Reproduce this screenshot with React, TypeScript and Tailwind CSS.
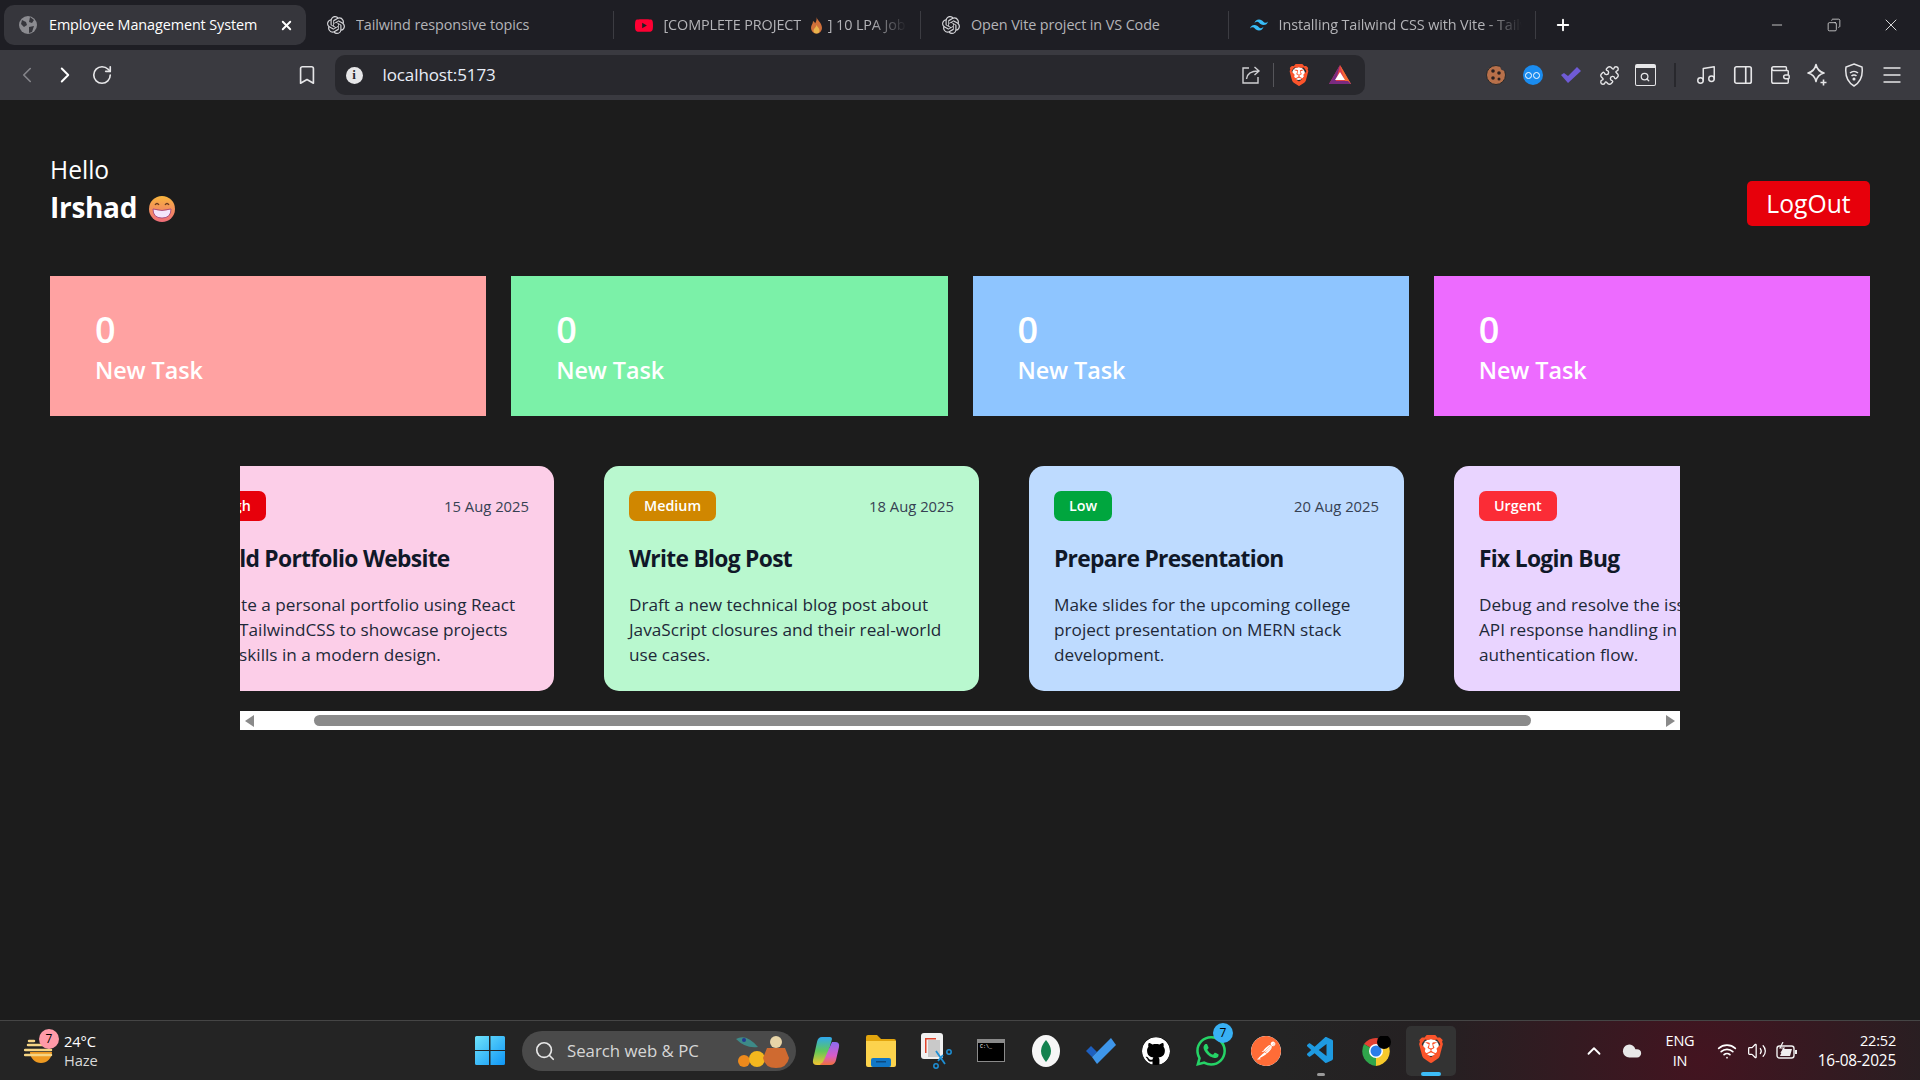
import React from 'react';
import {
  Bookmark, ChevronLeft, ChevronRight, ChevronUp, Cloud, Menu, Minus, Music, PanelRight, Plus, Puzzle,
  RotateCw, Search, Volume2, Wallet, Wifi, X, Copy,
} from 'lucide-react';
import { SiBrave, SiGithub, SiOpenai, SiPostman, SiTailwindcss, SiWhatsapp, SiYoutube } from 'react-icons/si';
import { VscVscode } from 'react-icons/vsc';

const stats = [
  { count: 0, label: 'New Task', bg: 'bg-red-300' },
  { count: 0, label: 'New Task', bg: 'bg-green-300' },
  { count: 0, label: 'New Task', bg: 'bg-blue-300' },
  { count: 0, label: 'New Task', bg: 'bg-fuchsia-400' },
];

const tasks = [
  {
    priority: 'High', date: '15 Aug 2025', title: 'Build Portfolio Website', bg: 'bg-pink-200', badge: 'bg-red-600',
    lines: ['Create a personal portfolio using React', 'and TailwindCSS to showcase projects', 'and skills in a modern design.'],
  },
  {
    priority: 'Medium', date: '18 Aug 2025', title: 'Write Blog Post', bg: 'bg-green-200', badge: 'bg-yellow-600',
    lines: ['Draft a new technical blog post about', 'JavaScript closures and their real-world', 'use cases.'],
  },
  {
    priority: 'Low', date: '20 Aug 2025', title: 'Prepare Presentation', bg: 'bg-blue-200', badge: 'bg-green-600',
    lines: ['Make slides for the upcoming college', 'project presentation on MERN stack', 'development.'],
  },
  {
    priority: 'Urgent', date: '22 Aug 2025', title: 'Fix Login Bug', bg: 'bg-purple-200', badge: 'bg-red-500',
    lines: ['Debug and resolve the issue with the', 'API response handling in the', 'authentication flow.'],
  },
];

function Globe() {
  return (
    <svg width="18" height="18" viewBox="0 0 18 18">
      <circle cx="9" cy="9" r="9" fill="#8b8b90" />
      <path d="M3 4l4 2 1 3-3 2-3-3zM11 1l4 3-2 3-3-1zM10 11l5-1-2 6-3 1z" fill="#36363c" />
    </svg>
  );
}

function Flame() {
  return (
    <svg width="13" height="17" viewBox="0 0 13 17" className="inline-block mx-[5px] -mt-[2px]">
      <path d="M6.5 0C7 3 12 6 12 11a5.500 5.500 0 0 1-11 0C1 8 3 7 3 4c1 .5 2 1.500 2 2.500C6 5 7 3 6.500 0z" fill="#d0703a" />
      <path d="M6.500 8c.5 2 3 3 3 5.500a3 3 0 0 1-6 0C3.500 11.500 6 10.500 6.500 8z" fill="#e8b34c" />
    </svg>
  );
}

function BraveIcon({ size, className }: { size: number; className?: string }) {
  return (
    <span className={`relative flex shrink-0 items-center justify-center ${className ?? ''}`}>
      <span className="absolute left-[20%] top-[15%] h-[60%] w-[60%] rounded-full bg-white" />
      <SiBrave size={size} className="relative text-[#fb542b]" />
    </span>
  );
}

function Tab({ icon, children, active, fade, last }: { icon: React.ReactNode; children: React.ReactNode; active?: boolean; fade?: boolean; last?: boolean }) {
  return (
    <div className={`relative flex h-10 shrink-0 items-center rounded-[10px] ${active ? 'w-[302px] bg-[#36363c] pl-[15px] pr-[12px] text-white' : 'w-[307.500px] pl-[21px] pr-[14px] text-[#b4b4b8]'} `}>
      <span className="flex w-[18px] shrink-0 items-center justify-center">{icon}</span>
      <span className={`flex-1 overflow-hidden whitespace-nowrap text-[14.400px] tracking-[-0.1px] ${active ? 'ml-[12px]' : 'ml-[11px]'} ${fade ? '[mask-image:linear-gradient(90deg,#000_85%,transparent)]' : ''}`}>{children}</span>
      {active && <X size={15} strokeWidth={3} className="text-white" />}
      {!active && !last && <span className="absolute right-0 top-[6px] h-[28px] w-px bg-[#3c3c42]" />}
    </div>
  );
}

function TabBar() {
  return (
    <div className="flex h-[50px] shrink-0 items-center bg-[#1e1e24] pl-1">
      <Tab icon={<Globe />} active>Employee Management System</Tab>
      <Tab icon={<SiOpenai size={18} className="text-[#d4d4d8]" />}>Tailwind responsive topics</Tab>
      <Tab icon={<SiYoutube size={21} className="text-[#ff0033]" />} fade>[COMPLETE PROJECT <Flame />] 10 LPA Job Ready</Tab>
      <Tab icon={<SiOpenai size={18} className="text-[#d4d4d8]" />}>Open Vite project in VS Code</Tab>
      <Tab icon={<SiTailwindcss size={20} className="text-[#38bdf8]" />} fade>Installing Tailwind CSS with Vite - Tailwind</Tab>
      <Plus size={18} strokeWidth={2.5} className="ml-[24px] -translate-x-[6px] text-white" />
      <div className="ml-auto flex items-center text-[#e8e8e8]">
        <Minus size={16} strokeWidth={1.2} className="mr-[42px]" />
        <Copy size={14} strokeWidth={1.3} className="mr-[40px] -scale-x-100" />
        <X size={20} strokeWidth={1.1} className="mr-[19px]" />
      </div>
    </div>
  );
}

function Toolbar() {
  return (
    <div className="flex h-[50px] shrink-0 items-center bg-[#3a3a40] pl-[14px] text-[#e6e6e8]">
      <ChevronLeft size={26} strokeWidth={1.5} className="text-[#85858a]" />
      <ChevronRight size={26} strokeWidth={1.8} className="ml-[12px] text-white" />
      <RotateCw size={22} strokeWidth={1.8} className="ml-[13px]" />
      <Bookmark size={22} strokeWidth={1.8} className="ml-[183px]" />
      <div className="ml-[16.500px] flex h-10 w-[1030px] shrink-0 items-center rounded-[10px] bg-[#28282d] pl-[11px] pr-[14px]">
        <span className="flex h-[17px] w-[17px] items-center justify-center rounded-full bg-[#e6e6e8] font-['Liberation_Serif',serif] text-[13px] font-bold text-[#28282d]">i</span>
        <span className="ml-[20px] text-[17px] tracking-[-0.1px] text-[#e8eef8]">localhost:5173</span>
        <svg width="20" height="20" viewBox="0 0 20 20" fill="none" stroke="#cfcfd2" strokeWidth="1.400" className="ml-auto">
          <path d="M8 3H2v15h15v-6" />
          <path d="M5.500 14c.5-5 4-8 12-8M13.500 2l4.500 4-4.500 4" />
        </svg>
        <span className="ml-[12px] h-[24px] w-px bg-[#55555a]" />
        <BraveIcon size={22} className="ml-[14px]" />
        <svg width="22" height="20" viewBox="0 0 22 20" className="ml-[19px]">
          <path d="M11 0L0 19h22z" fill="#e0404a" />
          <path d="M11 0L0 19h6z" fill="#7a2a80" />
          <path d="M11 0l11 19h-5z" fill="#f26a32" />
          <path d="M11 7l-5 8h10z" fill="#fff" />
          <path d="M0 19h22l-3-3H3z" fill="#7a2a80" />
        </svg>
      </div>
      <svg width="20" height="20" viewBox="0 0 20 20" className="ml-[121px]">
        <circle cx="10" cy="10" r="9.500" fill="#b8704a" stroke="#2a2a2a" />
        <circle cx="7" cy="6" r="1.800" fill="#2a2020" /><circle cx="13" cy="8" r="1.800" fill="#2a2020" />
        <circle cx="7" cy="13" r="1.800" fill="#2a2020" /><circle cx="13" cy="14" r="1.500" fill="#2a2020" />
        <circle cx="18" cy="2" r="3.500" fill="#3a3a40" />
      </svg>
      <span className="ml-[17px] flex h-5 w-5 items-center justify-center gap-px rounded-full bg-[#1a8cf0]">
        <span className="h-[7px] w-[7px] rounded-full border border-white" />
        <span className="h-[7px] w-[7px] rounded-full border border-white" />
      </span>
      <svg width="20" height="16" viewBox="0 0 20 16" className="ml-[18px]">
        <path d="M0 8l3-2 4 3 9-9 4 4L7 16z" fill="#6f5bd6" />
      </svg>
      <Puzzle size={21} strokeWidth={1.6} className="ml-[18px]" />
      <span className="ml-[15px] flex h-[22px] w-[21px] items-center justify-center rounded-[2px] border-[1.5px] border-t-[4px] border-[#e6e6e8]">
        <Search size={10} strokeWidth={3} />
      </span>
      <span className="ml-[18px] h-[24px] w-[2px] bg-[#28282d]" />
      <Music size={22} strokeWidth={1.6} className="ml-[19px]" />
      <PanelRight size={22} strokeWidth={1.8} className="ml-[15px]" />
      <Wallet size={22} strokeWidth={1.6} className="ml-[15px]" />
      <svg width="22" height="24" viewBox="0 0 22 24" fill="none" stroke="#e6e6e8" strokeWidth="1.600" className="ml-[15px]">
        <path d="M10 1.500q1.500 7 8 8.500q-6.500 1.500-8 8.500q-1.500-7-8-8.500q6.500-1.500 8-8.500z" strokeLinejoin="round" />
        <path d="M17.500 16.500v6M14.500 19.500h6" />
      </svg>
      <svg width="20" height="24" viewBox="0 0 20 24" fill="none" stroke="#e6e6e8" strokeWidth="1.500" className="ml-[16px]">
        <path d="M10 1l8 3c1 8-1 15-8 19C3 19 1 12 2 4z" />
        <path d="M6 10a6 6 0 0 1 8 0M7.500 13a3.500 3.500 0 0 1 5 0" />
        <circle cx="10" cy="16" r=".8" fill="#e6e6e8" />
      </svg>
      <Menu size={24} strokeWidth={1.4} className="ml-[16px]" />
    </div>
  );
}

function Grin() {
  return (
    <svg width="26" height="26" viewBox="0 0 26 26" className="ml-[12px] mt-[3px]">
      <defs>
        <linearGradient id="grin" x1="0" y1="0" x2="0" y2="1">
          <stop offset="0" stopColor="#f8b53c" />
          <stop offset="1" stopColor="#ee6c7a" />
        </linearGradient>
      </defs>
      <circle cx="13" cy="13" r="13" fill="url(#grin)" />
      <path d="M6 9q2-3 4 0M16 9q2-3 4 0" fill="none" stroke="#6b3a20" strokeWidth="1.300" />
      <path d="M4 13q9 3 18 0q0 9-9 9t-9-9z" fill="#f3e4fb" stroke="#9c3a78" strokeWidth=".8" />
    </svg>
  );
}

function TaskCard({ task }: { task: (typeof tasks)[number] }) {
  return (
    <div className={`h-[225px] w-[375px] shrink-0 rounded-[15px] p-[25px] ${task.bg}`}>
      <div className="flex items-center justify-between">
        <span className={`flex h-[30px] items-center rounded-[7px] px-[15px] text-[14.300px] font-semibold text-white ${task.badge}`}>{task.priority}</span>
        <span className="text-[14.800px] text-[#364153]">{task.date}</span>
      </div>
      <h2 className="mt-[20px] text-[22.800px] font-bold leading-[35px] tracking-[-0.7px] text-[#101828]">{task.title}</h2>
      <p className="mt-[16px] text-[17.200px] leading-[25px] text-[#1e2939]">
        {task.lines.map((line) => (
          <span key={line} className="block whitespace-nowrap">{line}</span>
        ))}
      </p>
    </div>
  );
}

function ScrollStrip() {
  return (
    <div className="mx-auto mt-[50px] w-[1440px]">
      <div className="overflow-hidden">
        <div className="-ml-[61px] flex gap-[50px]">
          {tasks.map((task) => <TaskCard key={task.title} task={task} />)}
        </div>
      </div>
      <div className="mt-[20px] flex h-[19px] items-center bg-white pl-[5px] pr-[5px]">
        <span className="h-0 w-0 border-y-[6px] border-r-[9px] border-y-transparent border-r-[#8a8a8a]" />
        <span className="ml-[60px] h-[11px] w-[1217px] rounded-full bg-[#8a8a8a]" />
        <span className="ml-auto h-0 w-0 border-y-[6px] border-l-[9px] border-y-transparent border-l-[#8a8a8a]" />
      </div>
    </div>
  );
}

function Dashboard() {
  return (
    <main className="flex-1 bg-[#1c1c1c] px-[50px] pt-[50px] text-white">
      <div className="flex h-[76px] items-end justify-between">
        <div className="translate-y-[1px]">
          <p className="text-[24.600px] font-medium leading-[37px]">Hello</p>
          <div className="flex items-center">
            <span className="text-[28px] font-bold leading-[39px] tracking-[-0.3px]">Irshad</span>
            <Grin />
          </div>
        </div>
        <button className="h-[45px] w-[123px] rounded-[5px] bg-[#e7000b] pt-[2px] text-[24.700px] leading-none text-white">LogOut</button>
      </div>
      <div className="mt-[50px] grid grid-cols-4 gap-[25px]">
        {stats.map((stat) => (
          <div key={stat.bg} className={`h-[140px] px-[45px] pt-[30px] ${stat.bg}`}>
            <div className="text-[36px] font-semibold leading-[47px]">{stat.count}</div>
            <div className="text-[23.400px] font-semibold leading-[34px] tracking-[-0.1px]">{stat.label}</div>
          </div>
        ))}
      </div>
      <ScrollStrip />
    </main>
  );
}

function Windows() {
  return (
    <svg width="30" height="29" viewBox="0 0 30 29">
      <defs>
        <linearGradient id="win" x1="0" y1="0" x2="1" y2="1">
          <stop offset="0" stopColor="#6fe3fb" />
          <stop offset="1" stopColor="#0f96f6" />
        </linearGradient>
      </defs>
      <path d="M0 1.500A1.500 1.500 0 0 1 1.500 0H14v14H0zM15.500 0H28.500A1.500 1.500 0 0 1 30 1.500V14H15.500zM0 15h14v14H1.500A1.500 1.500 0 0 1 0 27.500zM15.500 15H30v12.500a1.500 1.500 0 0 1-1.500 1.500H15.500z" fill="url(#win)" />
    </svg>
  );
}

function Slot({ children, active, dot }: { children: React.ReactNode; active?: boolean; dot?: boolean }) {
  return (
    <div className={`relative flex h-[50px] w-[50px] shrink-0 items-center justify-center rounded-[5px] ${active ? 'bg-[#333]' : ''}`}>
      {children}
      {dot && <span className="absolute bottom-0 h-[3px] w-[8px] rounded-full bg-[#9a9a9a]" />}
      {active && <span className="absolute bottom-0 h-[4px] w-[20px] rounded-full bg-[#3dbdf8]" />}
    </div>
  );
}

function Taskbar() {
  return (
    <footer className="flex h-[60px] shrink-0 items-center border-t border-[#454545] bg-[radial-gradient(circle_at_1700px_40px,#431420_0,#252022_260px,#242424_420px)] text-white">
      <div className="relative ml-[24px] flex w-[451px] shrink-0 items-center">
        <svg width="30" height="30" viewBox="0 0 30 30">
          <path d="M6 16h22a11 11 0 0 1-22 0z" fill="#ee9a22" />
          <path d="M5 5h5M4 9h14M1 14h26M1 19h26" stroke="#f5d585" strokeWidth="2.500" strokeLinecap="round" />
        </svg>
        <span className="absolute left-[15px] -top-[3px] flex h-5 w-5 items-center justify-center rounded-full bg-[#ff9aa8] text-[12px] text-black">7</span>
        <div className="ml-[10px] text-[14.700px] leading-[19px] tracking-[-0.1px]">
          <div>24°C</div>
          <div className="text-[#d8d8d8]">Haze</div>
        </div>
      </div>
      <Windows />
      <div className="ml-[17px] flex h-10 w-[274px] shrink-0 items-center rounded-full bg-[#4a4a4a] pl-[12px]">
        <Search size={22} strokeWidth={1.8} className="text-[#e8e8e8]" />
        <span className="ml-[11px] text-[16.800px] text-[#d6d6d6]">Search web &amp; PC</span>
        <svg width="56" height="36" viewBox="0 0 56 36" className="ml-auto mr-[5px]">
          <path d="M1 6q10-6 22 8q-12 2-22-8z" fill="#3d8a88" />
          <circle cx="9" cy="7" r="2" fill="#243a90" />
          <circle cx="9" cy="28" r="6" fill="#ee8a1c" />
          <circle cx="22" cy="26" r="8" fill="#f4b81e" />
          <path d="M32 15h18l4 10q-2 10-13 10t-13-10z" fill="#cf6a30" />
          <circle cx="41" cy="9" r="6" fill="#e8d5a8" />
        </svg>
      </div>
      <div className="ml-[5px] flex gap-[5px]">
        <Slot>
          <svg width="28" height="30" viewBox="0 0 28 30">
            <defs>
              <linearGradient id="copa" x1="0" y1="0" x2="0" y2="1">
                <stop offset="0" stopColor="#2fa8f0" />
                <stop offset=".5" stopColor="#5fc85a" />
                <stop offset="1" stopColor="#f4c430" />
              </linearGradient>
              <linearGradient id="copb" x1="0" y1="0" x2="0" y2="1">
                <stop offset="0" stopColor="#8a6cf0" />
                <stop offset=".6" stopColor="#d85cc8" />
                <stop offset="1" stopColor="#f0703c" />
              </linearGradient>
            </defs>
            <path d="M10 1h8q2 0 2 2L14 25q-1 4-6 4H5q-5 0-4-5L5 6q1-5 5-5z" fill="url(#copa)" />
            <path d="M20 6h3q5 0 4 5l-3 13q-1 5-6 5h-8q-2 0-2-1 3-1 4-4z" fill="url(#copb)" />
          </svg>
        </Slot>
        <Slot>
          <svg width="30" height="32" viewBox="0 0 30 32">
            <path d="M0 2a2 2 0 0 1 2-2h9l4 4h13a2 2 0 0 1 2 2v4H0z" fill="#e2a50d" />
            <path d="M0 6h30v24a2 2 0 0 1-2 2H2a2 2 0 0 1-2-2z" fill="#fcd34d" />
            <rect x="5" y="23" width="20" height="9" rx="2" fill="#1177c7" />
            <rect x="10" y="26" width="10" height="1.500" fill="#0c4a80" />
          </svg>
        </Slot>
        <Slot>
          <svg width="32" height="36" viewBox="0 0 32 36">
            <rect x="1" y="0" width="22" height="26" rx="3" fill="#f1f1f1" />
            <path d="M5 5h11v1.500H6.500V20H5z" fill="#e0452c" />
            <rect x="8" y="7" width="12" height="17" fill="#c9c9c9" />
            <path d="M23 22l-5 6M16 18l9 13" stroke="#1d8fd6" strokeWidth="1.800" />
            <circle cx="29" cy="19" r="2.200" fill="none" stroke="#1d8fd6" strokeWidth="1.500" />
            <circle cx="16" cy="33" r="2.200" fill="none" stroke="#1d8fd6" strokeWidth="1.500" />
          </svg>
        </Slot>
        <Slot>
          <div className="h-[23px] w-[28px] border border-[#8a8a8a] bg-black">
            <div className="h-[3px] bg-[#8a8a8a]" />
            <div className="pl-[2px] pt-[2px] font-['Liberation_Mono',monospace] text-[5px] leading-none text-white">C:\_</div>
          </div>
        </Slot>
        <Slot>
          <svg width="28" height="32" viewBox="0 0 28 32">
            <ellipse cx="14" cy="16" rx="14" ry="16" fill="#f6f6f6" />
            <path d="M14 5q5 6 5 11t-5 11q-5-6-5-11t5-11z" fill="#13824f" />
          </svg>
        </Slot>
        <Slot>
          <svg width="30" height="26" viewBox="0 0 30 26">
            <path d="M0 13l5-5 6 6-5 5z" fill="#1d5fbf" />
            <path d="M11 26L6 19 25 0l5 7z" fill="#3e96ea" />
          </svg>
        </Slot>
        <Slot><SiGithub size={28} className="rounded-full bg-black text-white" /></Slot>
        <Slot>
          <SiWhatsapp size={30} className="text-[#25d366]" />
          <span className="absolute right-[3px] top-[-3px] flex h-5 w-5 items-center justify-center rounded-full bg-[#38b0f4] text-[12px] text-black">7</span>
        </Slot>
        <Slot><SiPostman size={30} className="rounded-full bg-white text-[#ff6c37]" /></Slot>
        <Slot dot><VscVscode size={32} className="text-[#1e9ae0]" /></Slot>
        <Slot>
          <svg width="30" height="30" viewBox="0 0 30 30">
            <path d="M15 15L3 8A15 15 0 0 1 27 8z" fill="#e34133" />
            <path d="M15 15L27 8A15 15 0 0 1 15 30z" fill="#f7c92b" />
            <path d="M15 15L15 30A15 15 0 0 1 3 8z" fill="#2fa54b" />
            <circle cx="15" cy="15" r="7" fill="#fff" />
            <circle cx="15" cy="15" r="5.500" fill="#2b7de9" />
            <circle cx="23" cy="6" r="7" fill="#000" />
          </svg>
        </Slot>
        <Slot active><BraveIcon size={28} className="-mt-[3px]" /></Slot>
      </div>
      <ChevronUp size={22} strokeWidth={2} className="ml-[127px]" />
      <Cloud size={22} fill="#e8e8e8" strokeWidth={0} className="ml-[16px]" />
      <div className="ml-[20px] w-[34px] text-center text-[14.500px] leading-[20px] tracking-[-0.2px]">
        <div>ENG</div>
        <div>IN</div>
      </div>
      <Wifi size={20} strokeWidth={2} className="ml-[20px]" />
      <Volume2 size={20} strokeWidth={1.5} className="ml-[10px]" />
      <svg width="22" height="18" viewBox="0 0 22 18" className="ml-[9px]" fill="none" stroke="#f0f0f0" strokeWidth="1.400">
        <rect x="1" y="4" width="17" height="12" rx="2.500" />
        <path d="M20 8v4" strokeWidth="2" />
        <path d="M4 14l3-7h9l-2 7z" fill="#f0f0f0" stroke="none" />
        <path d="M7 0L4 6h4L5 11" strokeWidth="1.200" />
      </svg>
      <div className="ml-auto mr-[24px] text-right leading-[20px]">
        <div className="text-[14.500px] tracking-[-0.2px]">22:52</div>
        <div className="text-[15.400px] tracking-[-0.2px]">16-08-2025</div>
      </div>
    </footer>
  );
}

export default function App() {
  return (
    <div className="flex h-screen flex-col overflow-hidden font-['Open_Sans',sans-serif]">
      <TabBar />
      <Toolbar />
      <Dashboard />
      <Taskbar />
    </div>
  );
}
